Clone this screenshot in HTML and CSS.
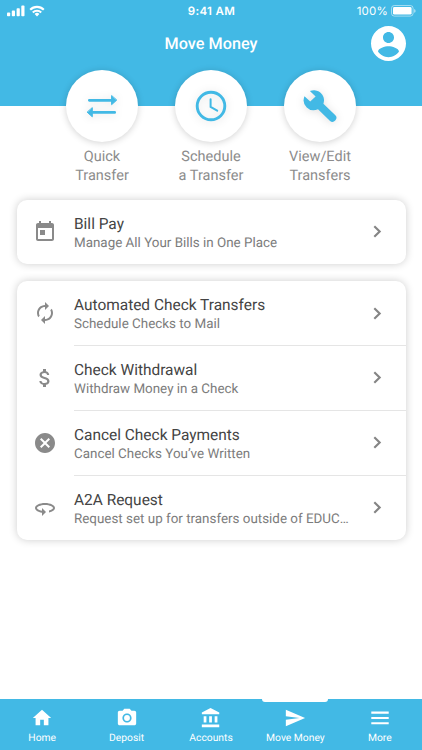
FILE: index.html
```html
<!DOCTYPE html>
<html lang="en">
<head>
<meta charset="utf-8">
<title>Move Money</title>
<link rel="stylesheet" href="styles.css">
</head>
<body>
<div class="screen">
  <header class="header">
    <div class="status">
      <div class="signals">
        <svg width="18" height="12" viewBox="0 0 18 12" fill="currentColor"><rect x="0" y="7.4" width="3.2" height="3.9" rx=".8"/><rect x="4.8" y="5.6" width="3.2" height="5.7" rx=".8"/><rect x="9.6" y="3.3" width="3.2" height="8" rx=".8"/><rect x="14.3" y=".6" width="3.2" height="10.7" rx=".8"/></svg>
        <svg width="16" height="12" viewBox="0 0 16 12" fill="none" stroke="currentColor" stroke-width="2.1"><path d="M1.2 4.7a9.6 9.6 0 0 1 13.6 0M3.8 7.5a5.9 5.9 0 0 1 8.4 0"/><path d="M8 11.4 5.6 9a3.4 3.4 0 0 1 4.8 0z" fill="currentColor" stroke="none"/></svg>
      </div>
      <span class="time">9:41 AM</span>
      <div class="power"><span>100%</span>
        <svg width="25" height="12" viewBox="0 0 25 12"><rect x=".5" y=".5" width="21.6" height="10.6" rx="2.8" fill="none" stroke="#fff" stroke-opacity=".5"/><rect x="2" y="2" width="18.6" height="7.6" rx="1.4" fill="#fff"/><path d="M23.2 4v3.8a2 2 0 0 0 0-3.8" fill="#fff" opacity=".6"/></svg>
      </div>
    </div>
    <div class="titlebar">
      <h1>Move Money</h1>
      <svg class="avatar" viewBox="2 2 20 20" fill="#fff"><path d="M12 2C6.48 2 2 6.48 2 12s4.480 10 10 10 10-4.480 10-10S17.520 2 12 2zm0 3.400c1.760 0 3.150 1.400 3.150 3.150S13.760 11.700 12 11.700s-3.150-1.400-3.150-3.150S10.240 5.400 12 5.400zm0 14.400c-2.500 0-4.710-1.280-6-3.220.03-1.990 4-3.080 6-3.080s5.970 1.090 6 3.080c-1.290 1.940-3.500 3.220-6 3.220z"/></svg>
    </div>
  </header>

  <section class="actions">
    <div class="action">
      <div class="disc"><svg width="32" height="24" viewBox="0 0 32 24" fill="#42b9e5" stroke="#42b9e5" stroke-width="2.700" stroke-linecap="round"><path d="M3.300 6.300H27M5 18.400h23.700"/><path d="M25.600 1.900v8.800l4.900-4.400zM6.300 14v8.800l-4.900-4.400z" stroke-width="1" stroke-linejoin="round"/></svg></div>
      <p>Quick<br>Transfer</p>
    </div>
    <div class="action">
      <div class="disc"><svg width="32" height="32" viewBox="0 0 32 32" fill="none" stroke="#42b9e5"><circle cx="16" cy="16" r="13.800" stroke-width="2.900"/><path d="M15.600 9.300v7.600l6.600 3.800" stroke-width="2" stroke-linecap="round"/></svg></div>
      <p>Schedule<br>a Transfer</p>
    </div>
    <div class="action">
      <div class="disc"><svg width="34" height="34" viewBox="0 0 34 34"><path d="M11.500 1.300a10 10 0 0 1 8.900 13.400L32.100 26.100a3.700 3.700 0 0 1-5.300 5.600L15 20.200A10 10 0 0 1 1.500 7.200l5.700 5.400 5.400-5.200-5.700-5.300a10 10 0 0 1 4.600-.8z" fill="#42b9e5"/></svg></div>
      <p>View/Edit<br>Transfers</p>
    </div>
  </section>

  <main class="cards">
    <section class="card">
      <div class="row">
        <svg class="icon" viewBox="0 0 24 24"><path d="M19 3h-1V1h-2v2H8V1H6v2H5c-1.110 0-1.990.9-1.990 2L3 19c0 1.100.89 2 2 2h14c1.100 0 2-.9 2-2V5c0-1.100-.9-2-2-2zm0 16H5V8h14v11zM7 10h5v5H7z"/></svg>
        <div class="body"><div class="text"><h2>Bill Pay</h2><p>Manage All Your Bills in One Place</p></div><svg class="chevron" viewBox="0 0 8 12"><path d="M1.200 1.200 6.200 6l-5 4.800"/></svg></div>
      </div>
    </section>
    <section class="card">
      <div class="row">
        <svg class="icon" viewBox="0 0 24 24"><path d="M12 6v3l4-4-4-4v3c-4.420 0-8 3.580-8 8 0 1.570.46 3.030 1.240 4.260L6.700 14.800c-.45-.83-.7-1.790-.7-2.800 0-3.310 2.690-6 6-6zm6.760 1.740L17.300 9.200c.44.84.7 1.790.7 2.800 0 3.310-2.690 6-6 6v-3l-4 4 4 4v-3c4.420 0 8-3.580 8-8 0-1.570-.46-3.030-1.240-4.260z"/></svg>
        <div class="body"><div class="text"><h2>Automated Check Transfers</h2><p>Schedule Checks to Mail</p></div><svg class="chevron" viewBox="0 0 8 12"><path d="M1.200 1.200 6.200 6l-5 4.800"/></svg></div>
      </div>
      <div class="row">
        <svg class="icon" viewBox="0 0 24 24"><path d="M11.800 10.900c-2.270-.59-3-1.200-3-2.150 0-1.090 1.010-1.850 2.700-1.850 1.780 0 2.440.85 2.500 2.100h2.210c-.07-1.720-1.120-3.300-3.210-3.810V3h-3v2.160c-1.940.42-3.500 1.680-3.500 3.610 0 2.310 1.910 3.460 4.700 4.130 2.500.6 3 1.480 3 2.410 0 .69-.49 1.790-2.700 1.790-2.060 0-2.870-.92-2.980-2.100h-2.200c.12 2.190 1.760 3.420 3.680 3.830V21h3v-2.150c1.950-.37 3.500-1.500 3.500-3.550 0-2.840-2.430-3.810-4.700-4.400z"/></svg>
        <div class="body"><div class="text"><h2>Check Withdrawal</h2><p>Withdraw Money in a Check</p></div><svg class="chevron" viewBox="0 0 8 12"><path d="M1.200 1.200 6.200 6l-5 4.800"/></svg></div>
      </div>
      <div class="row">
        <svg class="icon" viewBox="0 0 24 24"><path d="M12 2C6.470 2 2 6.470 2 12s4.470 10 10 10 10-4.470 10-10S17.530 2 12 2zm5 13.590L15.590 17 12 13.410 8.410 17 7 15.590 10.590 12 7 8.410 8.410 7 12 10.590 15.590 7 17 8.410 13.410 12 17 15.590z"/></svg>
        <div class="body"><div class="text"><h2>Cancel Check Payments</h2><p>Cancel Checks You’ve Written</p></div><svg class="chevron" viewBox="0 0 8 12"><path d="M1.200 1.200 6.200 6l-5 4.800"/></svg></div>
      </div>
      <div class="row">
        <svg class="icon" viewBox="0 0 24 24"><path d="M12 7C6.480 7 2 9.240 2 12c0 2.240 2.940 4.130 7 4.770V20l4-4-4-4v2.730c-3.150-.56-5-1.900-5-2.730 0-1.060 3.040-3 8-3s8 1.940 8 3c0 .73-1.460 1.890-4 2.530v2.050c3.530-.77 6-2.530 6-4.580 0-2.760-4.480-5-10-5z"/></svg>
        <div class="body"><div class="text"><h2>A2A Request</h2><p>Request set up for transfers outside of EDUC…</p></div><svg class="chevron" viewBox="0 0 8 12"><path d="M1.200 1.200 6.200 6l-5 4.800"/></svg></div>
      </div>
    </section>
  </main>

  <nav class="tabs">
    <div class="tab"><svg viewBox="0 0 24 24"><path d="M10 20v-6h4v6h5v-8h3L12 3 2 12h3v8z"/></svg><span>Home</span></div>
    <div class="tab"><svg viewBox="0 0 24 24"><circle cx="12" cy="12" r="3.200"/><path d="M9 2 7.170 4H4c-1.100 0-2 .9-2 2v12c0 1.100.9 2 2 2h16c1.100 0 2-.9 2-2V6c0-1.100-.9-2-2-2h-3.170L15 2H9zm3 15c-2.760 0-5-2.240-5-5s2.240-5 5-5 5 2.240 5 5-2.240 5-5 5z"/></svg><span>Deposit</span></div>
    <div class="tab"><svg viewBox="0 0 24 24"><path d="M4 10v7h3v-7H4zm6 0v7h3v-7h-3zM2 22h19v-3H2v3zm14-12v7h3v-7h-3zm-4.500-9L2 6v2h19V6l-9.500-5z"/></svg><span>Accounts</span></div>
    <div class="tab active"><svg viewBox="0 0 24 24"><path d="M2.010 21 23 12 2.010 3 2 10l15 2-15 2z"/></svg><span>Move Money</span></div>
    <div class="tab"><svg viewBox="0 0 24 24"><path d="M2.500 5h19v2.300h-19zm0 5.800h19v2.300h-19zm0 5.800h19v2.300h-19z"/></svg><span>More</span></div>
  </nav>
</div>
</body>
</html>
```
FILE: styles.css
```css
* { box-sizing: border-box; }
body { margin: 0; font-family: Roboto, "Liberation Sans", sans-serif; background: #fff; text-rendering: geometricPrecision; }
h1, h2, p { margin: 0; font-weight: 400; }
svg { display: block; flex: none; }

.screen { width: 422px; height: 750px; display: flex; flex-direction: column; overflow: hidden; }

.header { height: 106px; flex: none; background: #42b9e5; color: #fff; }
.status { height: 22px; display: grid; grid-template-columns: 1fr auto 1fr; align-items: center; padding: 0 6px 0 7px; font-family: Inter, sans-serif; font-size: 11.5px; }
.signals { display: flex; gap: 4px; align-items: center; padding-bottom: 1px; }
.time { font-weight: 600; letter-spacing: .35px; }
.power { display: flex; gap: 3px; align-items: center; justify-content: flex-end; letter-spacing: .2px; }
.titlebar { height: 42px; display: grid; grid-template-columns: 1fr auto 1fr; align-items: center; padding: 0 16px; }
h1 { grid-column: 2; padding-top: 1px; font-size: 16.2px; font-weight: 500; letter-spacing: .03px; }
.avatar { width: 35px; height: 35px; justify-self: end; }

.actions { display: flex; justify-content: center; margin-top: -36px; height: 129.5px; flex: none; }
.action { width: 109px; display: flex; flex-direction: column; align-items: center; }
.disc { width: 72px; height: 72px; border-radius: 50%; background: #fff; display: flex; align-items: center; justify-content: center; box-shadow: 0 1px 7px rgba(0, 0, 0, .18); }
.disc svg { filter: drop-shadow(0 1px 4px rgba(0, 0, 0, .12)); }
.action p { margin-top: 5px; font-size: 14.5px; line-height: 19px; text-align: center; color: #8c8c8c; }

.cards { display: flex; flex-direction: column; gap: 16.2px; padding: 0 16.5px; }
.card { border-radius: 10px; background: #fff; box-shadow: 0 0 8px rgba(0, 0, 0, .2); }
.row { display: flex; align-items: center; height: 64.9px; padding-left: 16.5px; }
.icon { width: 24px; height: 24px; fill: #8a8a8a; }
.body { flex: 1; height: 100%; margin-left: 17px; display: flex; align-items: center; justify-content: space-between; padding-right: 24px; }
.row + .row .body { border-top: 1px solid #e5e5e5; padding-bottom: 1px; }
.text { padding-top: 3px; }
h2 { font-size: 15.45px; line-height: 20px; color: #444; white-space: nowrap; }
.text p { margin-top: 1px; font-size: 13.4px; line-height: 18px; color: #7c7c7c; white-space: nowrap; }
.chevron { width: 8.6px; height: 13px; fill: none; stroke: #858585; stroke-width: 2; }

.tabs { height: 51px; flex: none; margin-top: auto; background: #42b9e5; color: #fff; display: grid; grid-template-columns: repeat(5, 1fr); }
.tab { position: relative; display: flex; flex-direction: column; align-items: center; padding-top: 8px; font-size: 10.3px; line-height: 14px; }
.tab svg { width: 22px; height: 22px; fill: currentColor; margin-bottom: 2px; }
.tab.active::before { content: ""; position: absolute; top: 0; width: 66px; height: 3px; background: #fff; border-radius: 0 0 3px 3px; }
```
